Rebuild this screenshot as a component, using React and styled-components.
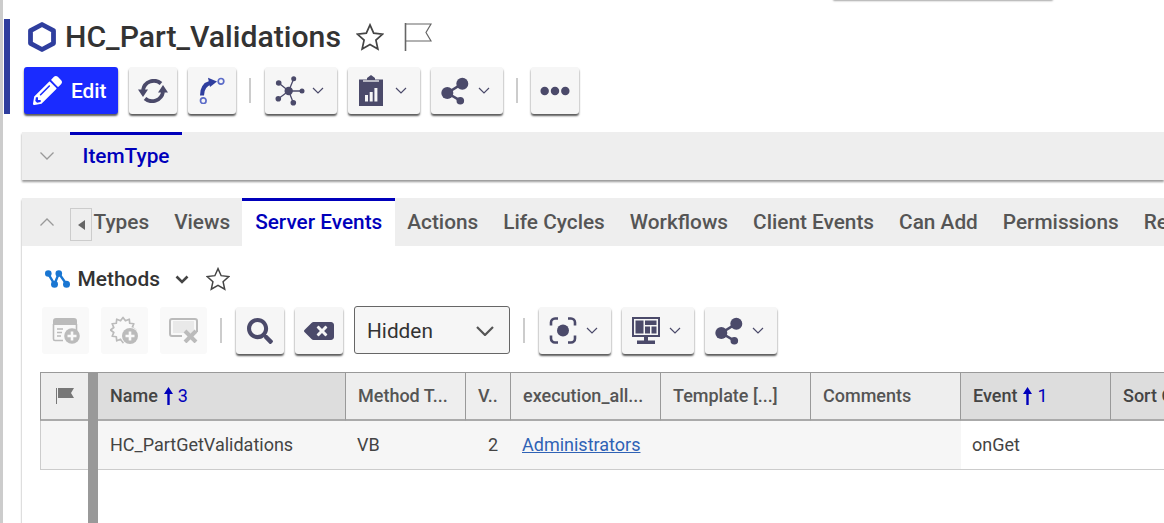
import React from "react";
import styled, { createGlobalStyle } from "styled-components";
import { FaPencilAlt, FaSearch, FaBackspace, FaEllipsisH } from "react-icons/fa";

const ICON = "#4b4a6a";

const GlobalStyle = createGlobalStyle`
  html, body {
    margin: 0;
    padding: 0;
    height: 100%;
    overflow: hidden;
    background: #fff;
    font-family: Roboto, "Liberation Sans", sans-serif;
  }
  #root { height: 100%; }
`;

const Page = styled.div`
  display: flex;
  width: 1164px;
  height: 523px;
  overflow: hidden;
  border-left: 3px solid #ccc;
  box-sizing: border-box;
  position: relative;
`;

// sliver of a popup peeking in at the top edge
const TopSliver = styled.div`
  position: absolute;
  top: -3px;
  left: 830px;
  width: 220px;
  height: 3px;
  border-radius: 3px;
  box-shadow: 0 1px 2px rgba(0, 0, 0, 0.35);
`;

const Content = styled.div`
  flex: 1;
  min-width: 0;
  padding-top: 19px;
`;

const Header = styled.header`
  margin-left: 1px;
  height: 95px;
  border-left: 6px solid #2f3e9e;
  padding-left: 14px;
`;

const TitleRow = styled.div`
  display: flex;
  align-items: center;
  height: 36px;
  margin-bottom: 12px;
  padding-left: 4px;
`;

const Title = styled.h1`
  margin: 0 0 0 9px;
  font-size: 30.2px;
  font-weight: 500;
  color: #333;
  line-height: 36px;
  white-space: nowrap;
`;

const TitleStar = styled.span`
  display: flex;
  margin-left: 15px;
`;

const TitleFlag = styled.span`
  display: flex;
  margin-left: 20px;
`;

const Toolbar = styled.div`
  display: flex;
  align-items: center;
  gap: 11px;
  padding-left: ${(p) => p.$inset || 0}px;
`;

const ToolButton = styled.button`
  display: flex;
  align-items: center;
  justify-content: center;
  box-sizing: border-box;
  flex: none;
  width: 48px;
  height: 47px;
  padding: 0;
  border: none;
  border-radius: 3px;
  background: #f6f6f6;
  box-shadow: 0 2px 2px rgba(0, 0, 0, 0.65);
  color: ${ICON};
`;

const MoreButton = styled(ToolButton)`
  margin-left: -1px;
`;

const FadedButton = styled(ToolButton)`
  width: 47px;
  margin-left: 1px;
  background: #f9f9f9;
  box-shadow: none;
`;

const MenuShell = styled(ToolButton)`
  width: 72px;
  justify-content: flex-start;
  gap: 7px;
  padding-left: 10px;
`;

const IconSlot = styled.span`
  display: flex;
  width: 30px;
`;

const EditButton = styled(ToolButton)`
  width: 94px;
  justify-content: flex-start;
  gap: 9px;
  padding-left: 9px;
  background: #1a2bff;
  color: #fff;
  font: 500 20.8px Roboto, sans-serif;
`;

const Separator = styled.span`
  flex: none;
  width: 2px;
  height: 25px;
  margin: 0 3px 0 2px;
  background: #ccc;
`;

const Panel = styled.section`
  margin-left: 19px;
  background: #fff;
  box-shadow: 0 2px 2px rgba(0, 0, 0, 0.4);
`;

const AccordionPanel = styled(Panel)`
  margin-top: 18px;
`;

const MainPanel = styled(Panel)`
  margin-top: 18px;
  height: 340px;
  overflow: hidden;
`;

const TabBar = styled.div`
  display: flex;
  height: 48px;
  background: #eee;
  white-space: nowrap;
  overflow: hidden;
`;

const Fold = styled.span`
  display: flex;
  align-items: center;
  justify-content: center;
  box-sizing: border-box;
  width: 48px;
  padding-left: 2px;
  flex: none;
`;

const ScrollButton = styled.span`
  display: flex;
  align-items: center;
  justify-content: center;
  box-sizing: border-box;
  flex: none;
  width: 22px;
  height: 33px;
  margin-top: 10px;
  margin-right: -11px;
  border: 1px solid #ccc;
  position: relative;
  z-index: 1;
  &::before {
    content: "";
    border: 5px solid transparent;
    border-right: 7px solid #666;
    border-left: 0;
  }
`;

const Tab = styled.span`
  display: flex;
  align-items: center;
  flex: none;
  box-sizing: border-box;
  height: 48px;
  margin-left: ${(p) => (p.$active ? "-1px" : "0")};
  padding: 0 12.5px 4px ${(p) => (p.$active ? "13.5px" : "12.5px")};
  border-top: 3px solid ${(p) => (p.$active ? "#0000bb" : "transparent")};
  background: ${(p) => (p.$active ? "#fff" : "transparent")};
  color: ${(p) => (p.$active ? "#0000bb" : "#555")};
  font-size: 20.8px;
  font-weight: 500;
`;

const ItemTab = styled(Tab)`
  width: 112px;
  margin-left: 0;
  padding-left: 12.5px;
  background: transparent;
`;

const PanelBody = styled.div`
  padding: 20px 0 0 18px;
`;

const GridTitleRow = styled.div`
  display: flex;
  align-items: center;
  height: 26px;
  margin-bottom: 15px;
  padding-left: 4.5px;
`;

const GridTitle = styled.span`
  margin-left: 8px;
  font-size: 20.9px;
  font-weight: 500;
  color: #333;
`;

const GridCaret = styled.span`
  display: flex;
  margin-left: 15px;
`;

const GridStar = styled.span`
  display: flex;
  margin-left: 17px;
`;

const Select = styled.div`
  display: flex;
  align-items: center;
  justify-content: space-between;
  box-sizing: border-box;
  flex: none;
  width: 156px;
  height: 48px;
  margin-top: -1px;
  padding: 2px 15px 0 12px;
  border: 1px solid #666;
  border-radius: 3px;
  background: #f6f6f6;
  color: #333;
  font-size: 20.8px;
`;

const Grid = styled.div`
  display: flex;
  flex-direction: column;
  margin-top: 18px;
  width: 1200px;
`;

const GridRow = styled.div`
  display: flex;
  height: ${(p) => p.$height}px;
`;

const FlagCell = styled.div`
  display: flex;
  align-items: center;
  justify-content: center;
  box-sizing: border-box;
  flex: none;
  width: 48px;
  background: ${(p) => (p.$head ? "#eee" : "#f6f6f6")};
  border: 1px solid ${(p) => (p.$head ? "#999" : "#ccc")};
  border-top: ${(p) => (p.$head ? "1px solid #999" : "0")};
  border-bottom: ${(p) => (p.$head ? "2px solid #aaa" : "1px solid #ccc")};
  border-right: 0;
`;

const Frozen = styled.div`
  flex: none;
  width: 10px;
  background: #999;
`;

const HeadCell = styled.div`
  display: flex;
  align-items: center;
  box-sizing: border-box;
  flex: none;
  width: ${(p) => p.$width}px;
  padding: 0 0 1px 12px;
  background: ${(p) => (p.$sorted ? "#ddd" : "#eee")};
  border-top: 1px solid #999;
  border-bottom: 2px solid #aaa;
  border-right: 1px solid #999;
  font-size: 18px;
  font-weight: 500;
  color: ${(p) => (p.$sorted ? "#444" : "#555")};
  white-space: nowrap;
`;

const SortOrder = styled.span`
  display: inline-flex;
  align-items: center;
  margin-left: 6px;
  gap: 5px;
  color: #0000bb;
  font-weight: 400;
`;

const BodyCell = styled.div`
  display: flex;
  align-items: center;
  justify-content: ${(p) => (p.$right ? "flex-end" : "flex-start")};
  box-sizing: border-box;
  flex: none;
  width: ${(p) => p.$width}px;
  padding: ${(p) => (p.$right ? "0 13px 1px 0" : `0 0 1px ${p.$first ? 12 : 11}px`)};
  background: ${(p) => (p.$plain ? "#fff" : "#f6f6f6")};
  border-bottom: 1px solid #ccc;
  font-size: 18px;
  color: #444;
  white-space: nowrap;
`;

const CellLink = styled.a`
  color: #2f62b5;
  text-decoration: underline;
`;

const FrozenTail = styled.div`
  width: 10px;
  height: 60px;
  margin-left: 48px;
  background: #999;
`;

const Chevron = () => (
  <svg width="12" height="7" viewBox="0 0 12 7" fill="none" stroke="#4b4a6a" strokeWidth="1.2">
    <path d="M1 1l5 5 5-5" />
  </svg>
);

const FoldChevron = ({ up }) => (
  <svg width="14" height="8" viewBox="0 0 14 8" fill="none" stroke="#999" strokeWidth="1.3">
    <path d={up ? "M0.5 7.500L7 1l6.500 6.500" : "M0.500 0.500L7 7l6.500-6.500"} />
  </svg>
);

const SelectChevron = () => (
  <svg width="18" height="10" viewBox="0 0 18 10" fill="none" stroke="#555" strokeWidth="2.2">
    <path d="M1 1l8 8 8-8" />
  </svg>
);

const Hexagon = () => (
  <svg width="28" height="30" viewBox="0 0 28 30" fill="none" stroke="#2f3e9e" strokeWidth="4.8" strokeLinejoin="round">
    <path d="M14 2.500l11.500 6.200v12.600L14 27.500 2.500 21.300V8.700z" />
  </svg>
);

const StarOutline = ({ size }) => (
  <svg width={size} height={size} viewBox="0 0 26 26" fill="none" stroke="#444" strokeWidth="1.6" strokeLinejoin="miter">
    <path d="M13 1.800l3.400 7.600 8.300.900-6.200 5.600 1.800 8.200L13 20l-7.300 4.100 1.800-8.200-6.200-5.600 8.300-.900z" />
  </svg>
);

const FlagOutline = () => (
  <svg width="28" height="28" viewBox="0 0 28 28" fill="none" stroke="#666" strokeWidth="1.2">
    <path d="M1.500 0v28" strokeWidth="1.6" />
    <path d="M2 1h25l-5 8.500 5 8.500H2" />
  </svg>
);

const SyncIcon = () => (
  <svg width="30" height="24" viewBox="0 0 30 24" fill="none" stroke={ICON} strokeWidth="3.8">
    <path d="M23 4.500A11 11 0 0 0 5 11" />
    <path d="M7 19.500A11 11 0 0 0 25 13" />
    <path d="M0 10.500h10L5 18zM20 13.500h10L25 6z" fill={ICON} stroke="none" />
  </svg>
);

const RouteIcon = () => (
  <svg width="27" height="27" viewBox="0 0 27 27" fill="none">
    <circle cx="22" cy="4.300" r="2.800" strokeWidth="1.700" stroke="#5b6bc8" />
    <circle cx="4.300" cy="23.700" r="2.800" strokeWidth="1.700" stroke="#5b6bc8" />
    <path d="M3 18.500c0-7 3.500-11.500 9-13" stroke="#2f3e9e" strokeWidth="4" />
    <path d="M9 0.700l9 3.800-7 5.500z" fill="#2f3e9e" />
  </svg>
);

const NetworkIcon = () => (
  <svg width="30" height="30" viewBox="0 0 30 30" fill={ICON} stroke={ICON} strokeWidth="1.300">
    <path d="M13.700 15L18.700 2.700M13.700 15L3.700 7M13.700 15H27M13.700 15L3.300 22.700M13.700 15L18.300 26.700" />
    <circle cx="13.700" cy="15" r="4.200" stroke="none" />
    <circle cx="18.700" cy="2.700" r="2.500" stroke="none" />
    <circle cx="3.700" cy="7" r="2.800" stroke="none" />
    <circle cx="27" cy="15" r="2.500" stroke="none" />
    <circle cx="3.300" cy="22.700" r="2.800" stroke="none" />
    <circle cx="18.300" cy="26.700" r="2.800" stroke="none" />
  </svg>
);

const ClipboardIcon = () => (
  <svg width="25" height="31" viewBox="-1 0 25 31">
    <path d="M0 4.500h8V3l4-3 4 3v1.500h8V31H0z" fill={ICON} />
    <path d="M4 6h16" stroke="#f6f6f6" strokeWidth="1.300" />
    <path d="M6 20h3v6.500H6zM10.700 17h3v9.500h-3zM15.400 13h3v13.500h-3z" fill="#f6f6f6" />
  </svg>
);

const ShareIcon = () => (
  <svg width="28" height="28" viewBox="0 0 28 28" fill={ICON}>
    <path d="M6.300 16L21.300 6.700M6.300 16l13 7.700" stroke={ICON} strokeWidth="2.600" />
    <circle cx="21.300" cy="6.700" r="6" />
    <circle cx="6.300" cy="16" r="6" />
    <circle cx="19.300" cy="23.700" r="3.800" />
  </svg>
);

const FocusIcon = () => (
  <svg width="28" height="27" viewBox="0 0 28 27" fill="none" stroke={ICON} strokeWidth="2.600">
    <path d="M9 1.500H6a4 4 0 0 0-4 4v3M19 1.500h3a4 4 0 0 1 4 4v3M9 25.500H6a4 4 0 0 1-4-4v-3M19 25.500h3a4 4 0 0 0 4-4v-3" />
    <circle cx="14" cy="13.500" r="6" fill={ICON} stroke="none" />
  </svg>
);

const MonitorIcon = () => (
  <svg width="28" height="27" viewBox="0 0 28 27">
    <path d="M0 0h28v20H0z" fill={ICON} />
    <path d="M2 2h24v16H2z" fill="#f6f6f6" />
    <path d="M3.500 3.500h8v13h-8zM13 3.500h11.500v4.500H13zM13 9.500h5v7h-5zM19.500 9.500h5v7h-5z" fill={ICON} />
    <path d="M12 20h4v3.500h-4zM5 23.500h18V27H5z" fill={ICON} />
  </svg>
);

const NodesIcon = () => (
  <svg width="25" height="18" viewBox="0 0 25 18" fill="#1976d2">
    <path d="M3 3.300l6.500 11 4.300-11 7.700 11" fill="none" stroke="#1976d2" strokeWidth="2.400" />
    <circle cx="3.300" cy="3.500" r="3.300" />
    <circle cx="9.500" cy="14.300" r="3.500" />
    <circle cx="13.800" cy="3.500" r="3.300" />
    <circle cx="21.500" cy="14.300" r="3.500" />
  </svg>
);

const NewFormIcon = () => (
  <svg width="28" height="26" viewBox="0 0 28 26">
    <path d="M1 3a3 3 0 0 1 3-3h18a3 3 0 0 1 3 3v4H1z" fill="#bbb" />
    <path d="M1.500 6v15a1.500 1.500 0 0 0 1.500 1.500h8M24.500 6v6" fill="none" stroke="#bbb" strokeWidth="1.600" />
    <path d="M5 11h6M5 14.500h5M5 18h4" stroke="#bbb" strokeWidth="1.600" />
    <circle cx="20" cy="18" r="7.800" fill="#bbb" />
    <path d="M20 13.500v9M15.500 18h9" stroke="#f9f9f9" strokeWidth="2.600" />
  </svg>
);

// zigzag outline of the badge behind the plus
const badgePoints = Array.from({ length: 24 }, (_, i) => {
  const r = i % 2 ? 9.5 : 12.5;
  const a = (i * Math.PI) / 12;
  return `${(13 + r * Math.sin(a)).toFixed(2)},${(14 - r * Math.cos(a)).toFixed(2)}`;
}).join(" ");

const NewGearIcon = () => (
  <svg width="29" height="29" viewBox="0 0 29 29">
    <polygon points={badgePoints} fill="none" stroke="#bbb" strokeWidth="1.700" strokeLinejoin="round" />
    <circle cx="20" cy="20" r="9" fill="#f9f9f9" />
    <circle cx="20" cy="20" r="8" fill="#bbb" />
    <path d="M20 15.500v9M15.500 20h9" stroke="#f9f9f9" strokeWidth="2.600" />
  </svg>
);

const DeleteBoxIcon = () => (
  <svg width="29" height="25" viewBox="0 0 29 25">
    <path d="M4 3h21v12H4z" fill="#e9e9e9" />
    <path d="M13 18H3a2 2 0 0 1-2-2V3a2 2 0 0 1 2-2h23a2 2 0 0 1 2 2v11" fill="none" stroke="#bbb" strokeWidth="2" />
    <path d="M16 13l11 11M27 13L16 24" stroke="#bbb" strokeWidth="4" />
  </svg>
);

const SmallFlag = () => (
  <svg width="18" height="16" viewBox="0 0 18 16">
    <path d="M0.500 0v16" stroke="#777" />
    <path d="M2 0h16l-3 5 3 5H2z" fill="#777" />
  </svg>
);

const SortArrow = () => (
  <svg width="9" height="18" viewBox="0 0 9 18" fill="#0000bb">
    <path d="M4.500 0L9 7H5.700v11H3.300V7H0z" />
  </svg>
);

const CaretIcon = () => (
  <svg width="14" height="9" viewBox="0 0 14 9" fill="none" stroke="#444" strokeWidth="2.600">
    <path d="M1.500 1.500L7 7l5.500-5.500" />
  </svg>
);

const MenuButton = ({ icon }) => (
  <MenuShell>
    <IconSlot>{icon}</IconSlot>
    <Chevron />
  </MenuShell>
);

const tabs = ["Types", "Views", "Server Events", "Actions", "Life Cycles", "Workflows", "Client Events", "Can Add", "Permissions", "Relationships"];

const columns = [
  { label: "Name", width: 248, order: 3 },
  { label: "Method T...", width: 120 },
  { label: "V..", width: 45 },
  { label: "execution_all...", width: 150 },
  { label: "Template [...]", width: 150 },
  { label: "Comments", width: 150 },
  { label: "Event", width: 150, order: 1 },
  { label: "Sort Order", width: 150, sorted: true },
];

const cells = [
  { text: "HC_PartGetValidations", width: 248, first: true },
  { text: "VB", width: 120 },
  { text: "2", width: 45, right: true },
  { text: <CellLink href="#">Administrators</CellLink>, width: 150 },
  { text: "", width: 150 },
  { text: "", width: 150 },
  { text: "onGet", width: 150, plain: true },
  { text: "", width: 150, plain: true },
];

export default function App() {
  return (
    <Page>
      <GlobalStyle />
      <TopSliver />
      <Content>
        <Header>
          <TitleRow>
            <Hexagon />
            <Title>HC_Part_Validations</Title>
            <TitleStar><StarOutline size={28} /></TitleStar>
            <TitleFlag><FlagOutline /></TitleFlag>
          </TitleRow>
          <Toolbar>
            <EditButton><FaPencilAlt size={29} />Edit</EditButton>
            <ToolButton><SyncIcon /></ToolButton>
            <ToolButton><RouteIcon /></ToolButton>
            <Separator />
            <MenuButton icon={<NetworkIcon />} />
            <MenuButton icon={<ClipboardIcon />} />
            <MenuButton icon={<ShareIcon />} />
            <Separator />
            <MoreButton><FaEllipsisH size={30} /></MoreButton>
          </Toolbar>
        </Header>

        <AccordionPanel>
          <TabBar>
            <Fold><FoldChevron /></Fold>
            <ItemTab $active>ItemType</ItemTab>
          </TabBar>
        </AccordionPanel>

        <MainPanel>
          <TabBar>
            <Fold><FoldChevron up /></Fold>
            <ScrollButton />
            {tabs.map((t) => (
              <Tab key={t} $active={t === "Server Events"}>{t}</Tab>
            ))}
          </TabBar>
          <PanelBody>
            <GridTitleRow>
              <NodesIcon />
              <GridTitle>Methods</GridTitle>
              <GridCaret><CaretIcon /></GridCaret>
              <GridStar><StarOutline size={24} /></GridStar>
            </GridTitleRow>
            <Toolbar $inset={1}>
              <FadedButton><NewFormIcon /></FadedButton>
              <FadedButton><NewGearIcon /></FadedButton>
              <FadedButton><DeleteBoxIcon /></FadedButton>
              <Separator />
              <ToolButton><FaSearch size={26} /></ToolButton>
              <ToolButton><FaBackspace size={30} /></ToolButton>
              <Select>Hidden<SelectChevron /></Select>
              <Separator />
              <MenuButton icon={<FocusIcon />} />
              <MenuButton icon={<MonitorIcon />} />
              <MenuButton icon={<ShareIcon />} />
            </Toolbar>
            <Grid>
              <GridRow $height={49}>
                <FlagCell $head><SmallFlag /></FlagCell>
                <Frozen />
                {columns.map((c) => (
                  <HeadCell key={c.label} $width={c.width} $sorted={c.order || c.sorted}>
                    {c.label}
                    {c.order && <SortOrder><SortArrow />{c.order}</SortOrder>}
                  </HeadCell>
                ))}
              </GridRow>
              <GridRow $height={49}>
                <FlagCell />
                <Frozen />
                {cells.map((c, i) => (
                  <BodyCell key={i} $width={c.width} $right={c.right} $plain={c.plain} $first={c.first}>{c.text}</BodyCell>
                ))}
              </GridRow>
              <FrozenTail />
            </Grid>
          </PanelBody>
        </MainPanel>
      </Content>
    </Page>
  );
}
